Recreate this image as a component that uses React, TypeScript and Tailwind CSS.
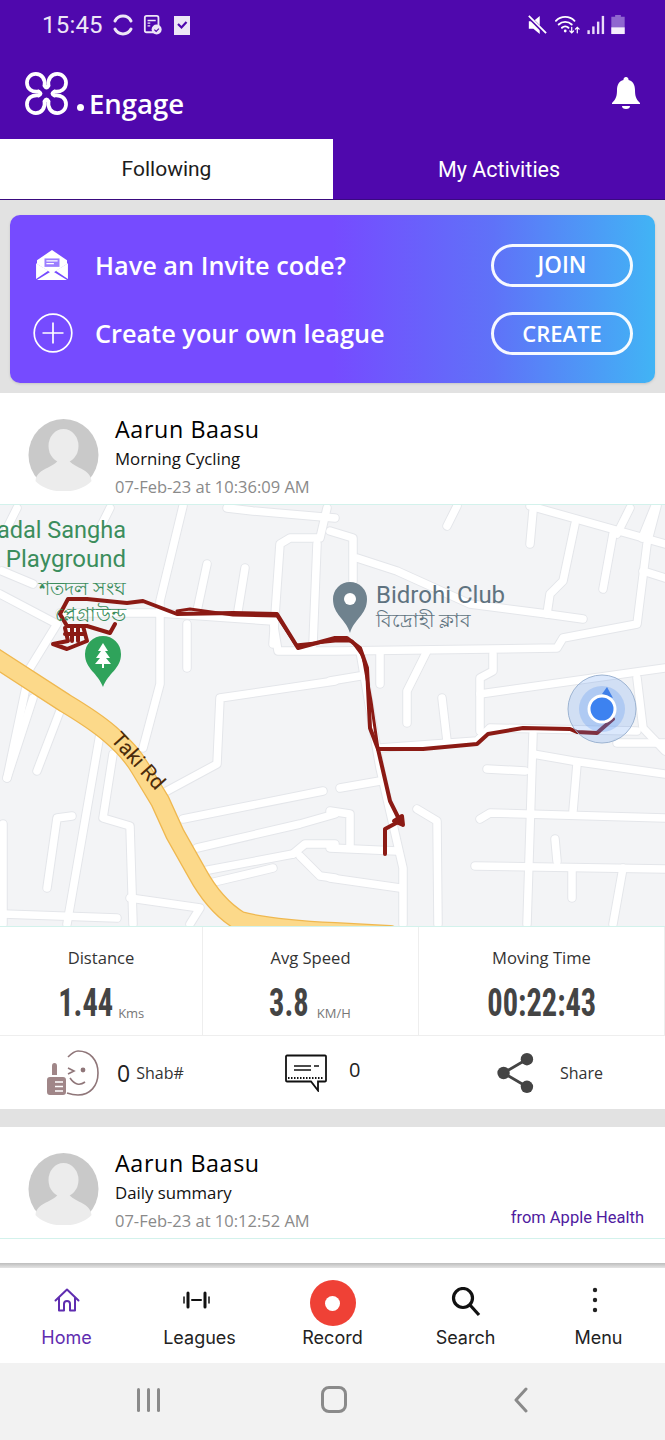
import React from 'react';

// street centre lines, in page coordinates (the map svg starts at y=504)
const roads = [
  'M0 593L57 623L30 667L7 777',
  'M183 505L160 600V683L143 747',
  'M110 507L100 527',
  'M17 507L7 527',
  'M2 570L33 583',
  'M60 612L160 612L273 620L278 650H335L557 647L563 637L637 623L647 543L657 505',
  'M207 563L197 610',
  'M245 567L238 610',
  'M187 623V667',
  'M335 680L220 697L217 763L167 790',
  'M323 790L183 818',
  'M335 813L300 823L197 847',
  'M293 853L203 870',
  'M273 867L210 882',
  'M335 843H305L293 853',
  'M300 855L320 875L335 877',
  'M100 733L67 923',
  'M60 710L37 770',
  'M33 697L7 777',
  'M113 753L103 817L130 825L133 923',
  'M72 815L57 817L47 887',
  'M3 823V923',
  'M130 897L200 907L190 923',
  'M3 913L117 917',
  'M327 507L320 537H290L280 543L273 643',
  'M317 543L313 643',
  'M227 507L253 510L335 517',
  'M330 530L353 537V580',
  'M357 557L397 570L470 603L547 613L583 618',
  'M457 505L447 525',
  'M533 510L530 543',
  'M530 505L665 543',
  'M575 523L563 580L550 593L547 613',
  'M613 533L603 588',
  'M630 507L617 533',
  'M655 505L642 537',
  'M643 570L665 577',
  'M380 650V683',
  'M427 650L407 690V722',
  'M493 653V670L480 677V730',
  'M330 680L360 675',
  'M442 697L447 740',
  'M480 693L665 667',
  'M380 747L477 740L490 727L637 730',
  'M637 677L643 727L665 750',
  'M617 742H665',
  'M533 733L527 923',
  'M487 768L525 770',
  'M533 753L573 760L665 773',
  'M577 763L573 810',
  'M480 818L490 812L665 817',
  'M475 865L665 868',
  'M555 838L557 860',
  'M572 867V897',
  'M623 867L613 923',
  'M340 787L380 780',
  'M360 650L380 767L403 867V923',
  'M417 808L437 820L438 923',
  'M330 810L350 813V847',
  'M330 847L397 850',
  'M330 877L400 887',
];

const takiRoad = 'M-6 656L65 702Q95 720 110 733Q130 750 140 767L160 800L175 833L197 872Q215 905 240 920Q270 928 335 931L390 934';

function MapArt() {
  return (
    <svg viewBox="0 504 665 421" className="block h-full w-full bg-[#f3f4f6]">
      <g fill="none" strokeLinecap="round" strokeLinejoin="round">
        <g stroke="#e4e6ea" strokeWidth="9.5">
          {roads.map((d) => <path key={d} d={d} />)}
        </g>
        <g stroke="#ffffff" strokeWidth="7.5">
          {roads.map((d) => <path key={d} d={d} />)}
        </g>
        <path d={takiRoad} stroke="#efb850" strokeWidth="20" />
        <path d={takiRoad} stroke="#fcd98a" strokeWidth="17.500" />
        {/* the recorded ride */}
        <g stroke="#8b1a14" strokeWidth="4">
          <path d="M115 623L110 632L87 625L67 625L60 613L68 598L87 598L127 602L143 600L177 613L233 612L277 613L298 647L335 637L347 637L360 647L367 667L370 727L378 748L390 800L400 820L385 828V853" />
          <path d="M177 610L190 608L233 614L277 615L296 644L335 640L352 640L363 655L371 700L378 748" strokeWidth="3" />
          <path d="M65 627L68 640L53 643L67 648L87 640L83 625M72 627V640M78 627V640M65 633H84" />
          <path d="M378 748H423L477 743L488 733L523 727L570 728L577 731L597 732L613 718" />
          <path d="M394 820L402 815L403 824Z" fill="#8b1a14" />
        </g>
      </g>
      <text x="126" y="537" textAnchor="end" fontFamily="Roboto, sans-serif" fontSize="23.500" fill="#3b8d5c">adal Sangha</text>
      <text x="126" y="566" textAnchor="end" fontFamily="Roboto, sans-serif" fontSize="24" fill="#3b8d5c">Playground</text>
      <text x="126" y="594" textAnchor="end" fontFamily="Noto Sans, sans-serif" fontSize="19" fill="#3b8d5c">শতদল সংঘ</text>
      <text x="126" y="620" textAnchor="end" fontFamily="Noto Sans, sans-serif" fontSize="19" fill="#3b8d5c">প্লেগ্রাউন্ড</text>
      <text x="376" y="602" fontFamily="Roboto, sans-serif" fontSize="24" fill="#5f7380">Bidrohi Club</text>
      <text x="376" y="626" fontFamily="Noto Sans, sans-serif" fontSize="18.500" fill="#5f7380">বিদ্রোহী ক্লাব</text>
      <text transform="translate(110 739) rotate(48)" fontFamily="Roboto, sans-serif" fontSize="21" fill="#4a2a0a">Taki Rd</text>
      {/* pins */}
      <path d="M103 686C98 672 85 668 85 653a18 18 0 0 1 36 0C121 668 108 672 103 686Z" fill="#2fa35b" />
      <path d="M103 642l5 8h-3l5 7h-4l5 6h-16l5-6h-4l5-7h-3Z" fill="#fff" />
      <rect x="102" y="663" width="2" height="4" fill="#fff" />
      <path d="M350 632C346 618 333 614 333 598a17 17 0 0 1 34 0C367 614 354 618 350 632Z" fill="#6f828e" />
      <circle cx="350" cy="598" r="6" fill="#fff" />
      {/* current location */}
      <circle cx="602" cy="708" r="34" fill="#4a8cf0" fillOpacity="0.2" stroke="#9db4d2" />
      <circle cx="602" cy="708" r="23" fill="#4a8cf0" fillOpacity="0.25" />
      <path d="M607 686L613 697L602 693Z" fill="#3f7fe8" />
      <circle cx="602" cy="708" r="13" fill="#3d82f0" stroke="#fff" strokeWidth="3" />
    </svg>
  );
}

function Avatar() {
  return (
    <svg viewBox="0 0 70 72" className="h-[72px] w-[71px] shrink-0">
      <ellipse cx="35" cy="36" rx="35" ry="36" fill="#c9c9c9" />
      <ellipse cx="35" cy="27" rx="15" ry="17" fill="#ececec" />
      <path d="M7 62C8 50 22 50 29 42H41C48 50 62 50 63 62C50 76 20 76 7 62Z" fill="#ececec" />
    </svg>
  );
}

function PostHead({ title, time }: { title: string; time: string }) {
  return (
    <div className="flex h-[111px] gap-[16px] pl-[28px] pt-[26px]">
      <Avatar />
      <div className="-mt-[5px] flex flex-col">
        <span className="text-[23.300px] leading-[30px] tracking-[0.6px] text-black">Aarun Baasu</span>
        <span className="mt-[3px] text-[16.800px] font-medium leading-[24px] text-[#111]">{title}</span>
        <span className="mt-[4px] text-[16.500px] leading-[24px] text-[#8a8a8a]">{time}</span>
      </div>
    </div>
  );
}

function Stat({ label, value, unit, className, rowClass, unitClass }: { label: string; value: string; unit: string; className: string; rowClass: string; unitClass: string }) {
  return (
    <div className={`flex flex-col items-center border-r border-[#eeeeee] pt-[20px] ${className}`}>
      <span className="text-[16.600px] leading-[22px] text-[#333]">{label}</span>
      <div className={`mt-[12px] flex items-end ${rowClass}`}>
        <span className="origin-center scale-x-[0.78] font-['Liberation_Sans_Narrow','Roboto_Condensed','Roboto',sans-serif] text-[39px] font-bold leading-[44px] text-[#444]">{value}</span>
        {unit && <span className={`mb-[4px] text-[13px] leading-[16px] text-[#777] ${unitClass}`}>{unit}</span>}
      </div>
    </div>
  );
}

function NavItem({ icon, label, active }: { icon: React.ReactNode; label: string; active?: boolean }) {
  return (
    <div className={`flex w-[133px] flex-col items-center font-['Inter',sans-serif] ${active ? 'text-[#5f2db0]' : 'text-[#222]'}`}>
      <div className="flex h-[50px] items-center justify-center">{icon}</div>
      <span className="-mt-[3px] text-[18px] leading-[26px]">{label}</span>
    </div>
  );
}

export default function App() {
  return (
    <div className="flex h-[1440px] w-[665px] flex-col overflow-hidden bg-white font-['Open_Sans',sans-serif]">
      {/* status bar and app bar */}
      <div className="bg-[#4f08ad] text-white">
        <div className="flex h-[54px] items-start justify-between pl-[42px] pr-[40px] pt-[10px]">
          <div className="flex items-center gap-[8px] opacity-90">
            <span className="font-['Roboto',sans-serif] text-[24px] leading-[30px] tracking-[0.2px]">15:45</span>
            <svg viewBox="0 0 24 24" className="h-[24px] w-[24px]" fill="none" stroke="#fff" strokeWidth="3" strokeLinecap="round">
              <path d="M20 8A9 9 0 0 0 4 8" />
              <path d="M4 16a9 9 0 0 0 16 0" />
            </svg>
            <svg viewBox="0 0 22 24" className="h-[22px] w-[20px]">
              <rect x="2" y="2" width="15" height="18" rx="2" fill="none" stroke="#fff" strokeWidth="2" />
              <path d="M5 7h9M5 10h3M5 13h3" stroke="#fff" strokeWidth="1.5" />
              <circle cx="15" cy="17" r="5.5" fill="#fff" />
              <path d="M12.5 17l2 2 3-3" stroke="#4f08ad" strokeWidth="1.3" fill="none" />
            </svg>
            <svg viewBox="0 0 18 22" className="ml-[2px] h-[22px] w-[18px]">
              <path d="M1 2h16v19H1Z" fill="#fff" />
              <path d="M5 10l3.5 3.5L13.500 8" stroke="#4f08ad" strokeWidth="2.200" fill="none" />
            </svg>
          </div>
          <div className="flex items-center gap-[6px] pt-[4px]">
            <svg viewBox="0 0 22 22" className="h-[20px] w-[20px]">
              <path d="M2 7h5l7-6v20l-7-6H2Z" fill="#fff" />
              <path d="M2 2l18 18" stroke="#4f08ad" strokeWidth="4" />
              <path d="M2 1l19 19" stroke="#fff" strokeWidth="2" />
            </svg>
            <svg viewBox="0 0 28 22" className="ml-[2px] h-[21px] w-[26px]" fill="none" stroke="#fff" strokeWidth="2" strokeLinecap="round">
              <path d="M1 7a14 14 0 0 1 20 0M4 11a10 10 0 0 1 14 0M7.500 14.500a5 5 0 0 1 7 0" />
              <circle cx="11" cy="18" r="1.500" fill="#fff" stroke="none" />
              <path d="M18 14v6M16 18l2 2 2-2M24 20v-6M22 16l2-2 2 2" strokeWidth="1.300" />
            </svg>
            <svg viewBox="0 0 18 22" className="h-[21px] w-[18px]" fill="#e9dcf8">
              <rect x="0" y="17" width="2.500" height="4" />
              <rect x="5" y="13" width="2.500" height="8" />
              <rect x="10" y="8" width="2.500" height="13" />
              <rect x="15" y="2" width="2.500" height="19" />
            </svg>
            <svg viewBox="0 0 14 22" className="h-[21px] w-[14px]">
              <path d="M4 1h6v2h4v18H0V3h4Z" fill="#8f66cf" />
              <path d="M0 14h14v7H0Z" fill="#f5eefc" />
            </svg>
          </div>
        </div>

        <div className="flex h-[85px] items-start justify-between pl-[25px] pr-[25px] pt-[18px]">
          <div className="flex items-end">
            {/* league logo: four loops around a hollow centre */}
            <svg viewBox="0 0 44 44" className="h-[43px] w-[43px]" fill="none" stroke="#fff" strokeWidth="3.800" strokeLinecap="round" strokeLinejoin="round">
              <path d="M20 14C21 7 17 2 11 2C6 2 2 6 2 11C2 17 7 21 14 20" />
              <path d="M24 14C23 7 27 2 33 2C38 2 42 6 42 11C42 17 37 21 30 20" />
              <path d="M20 30C21 37 17 42 11 42C6 42 2 38 2 33C2 27 7 23 14 24" />
              <path d="M24 30C23 37 27 42 33 42C38 42 42 38 42 33C42 27 37 23 30 24" />
              <path d="M20 14Q22 18 24 14M20 30Q22 26 24 30M14 20Q18 22 14 24M30 20Q26 22 30 24" />
            </svg>
            <span className="mb-[4px] ml-[9px] h-[7px] w-[7px] rounded-full bg-white" />
            <span className="-mb-[5px] ml-[5px] text-[27.500px] font-semibold leading-[32px]">Engage</span>
          </div>
          <svg viewBox="0 0 28 32" className="mt-[5px] h-[32px] w-[28px]" fill="#fff">
            <path d="M14 0a2.500 2.500 0 0 1 2.500 3C21 4 23 8 23 13c0 6 1 9 5 13v1H0v-1c4-4 5-7 5-13 0-5 2-9 6.500-10A2.500 2.500 0 0 1 14 0Z" />
            <path d="M10 29h8a4 3 0 0 1-8 0Z" />
          </svg>
        </div>

        <div className="flex h-[61px] border-b border-[#3a0a80]">
          <div className="flex w-[333px] items-center justify-center bg-white pt-[2px] font-['Roboto',sans-serif] text-[21px] text-[#1c1c1c]">Following</div>
          <div className="flex flex-1 items-center justify-center pt-[2px] font-['Roboto',sans-serif] text-[21.500px] text-white">My Activities</div>
        </div>
      </div>

      {/* league banner */}
      <div className="bg-[#e2e2e2] px-[10px] pb-[10px] pt-[15px]">
        <div className="h-[168px] rounded-[10px] bg-[linear-gradient(90deg,#764bff_0%,#764bff_50%,#5f72f8_75%,#41b4f5_100%)] pl-[23px] pr-[22px] pt-[28px] text-white shadow-sm">
          <div className="flex h-[44px] items-center">
            <svg viewBox="0 0 34 32" className="ml-[3px] h-[30px] w-[32px]" fill="#fff">
              <path d="M17 0L33 11V15L17 25L1 15V11Z" />
              <path d="M0 14L13 22L0 31ZM34 14V31L21 22ZM15 23.500h4L33 32H1Z" />
              <path d="M9 9h16v9H9Z" fill="#9b7dff" />
              <path d="M11 11.500h12M11 14.500h8" stroke="#fff" strokeWidth="1.300" />
            </svg>
            <span className="ml-[27px] flex-1 text-[25.300px] font-semibold leading-[32px]">Have an Invite code?</span>
            <div className="flex h-[43px] w-[142px] items-center justify-center rounded-full border-[3px] border-white/95 text-[22.500px] font-semibold">JOIN</div>
          </div>
          <div className="mt-[24px] flex h-[44px] items-center">
            <svg viewBox="0 0 40 40" className="h-[40px] w-[40px]" fill="none" stroke="#fff" strokeWidth="1.700">
              <circle cx="20" cy="20" r="18.800" />
              <path d="M20 9.500v21M9.500 20h21" />
            </svg>
            <span className="ml-[22px] flex-1 text-[25.300px] font-semibold leading-[32px]">Create your own league</span>
            <div className="flex h-[43px] w-[142px] items-center justify-center rounded-full border-[3px] border-white/95 text-[22px] font-semibold">CREATE</div>
          </div>
        </div>
      </div>

      {/* first post */}
      <PostHead title="Morning Cycling" time="07-Feb-23 at 10:36:09 AM" />
      <div className="h-[423px] border-y border-[#d3f2ec]">
        <MapArt />
      </div>
      <div className="flex h-[109px] border-b border-[#eeeeee]">
        <Stat label="Distance" value="1.44" unit="Kms" className="w-[203px]" rowClass="-translate-x-[3.500px]" unitClass="-ml-[3px]" />
        <Stat label="Avg Speed" value="3.8" unit="KM/H" className="w-[216px]" rowClass="-translate-x-[3.500px]" unitClass="ml-[3px]" />
        <Stat label="Moving Time" value="00:22:43" unit="" className="flex-1" rowClass="" unitClass="" />
      </div>
      <div className="flex h-[73px] items-center">
        <div className="flex w-[250px] items-center pl-[47px]">
          <svg viewBox="0 0 52 46" className="h-[46px] w-[52px]">
            <path d="M21 7C25 3 28 1 31 1C43 1 51 10 51 23C51 36 43 45 31 45C27 45 23 44 20 43" fill="none" stroke="#8f7679" strokeWidth="1.600" />
            <path d="M21 18L27 21L21 24" fill="none" stroke="#8f7679" strokeWidth="1.600" />
            <circle cx="36" cy="20" r="2.400" fill="#8f7679" />
            <path d="M23 28Q30 38 38 32" fill="none" stroke="#8f7679" strokeWidth="1.600" />
            <path d="M5 16a2.500 3 0 0 1 5 0v9H5ZM3 27h13a3 3 0 0 1 3 3v12a3 3 0 0 1-3 3H3a3 3 0 0 1-3-3V30a3 3 0 0 1 3-3Z" fill="#a08688" />
            <path d="M8 32h8M8 36.500h8M8 41h8" stroke="#fff" strokeWidth="1.500" />
          </svg>
          <span className="ml-[18px] text-[23px] leading-[30px] text-[#222]">0</span>
          <span className="ml-[6px] text-[16px] leading-[24px] text-[#333]">Shab#</span>
        </div>
        <div className="flex w-[247px] items-center pl-[35px]">
          <svg viewBox="0 0 42 38" className="h-[38px] w-[42px]" fill="none" stroke="#111">
            <path d="M2 1.500h38a1 1 0 0 1 1 1v24a1 1 0 0 1-1 1H33v9l-7-9H2a1 1 0 0 1-1-1v-24a1 1 0 0 1 1-1Z" strokeWidth="1.800" />
            <path d="M9 12h17M9 16h17M29 12h5" strokeWidth="1.600" />
            <path d="M3 24h36" strokeWidth="2.200" strokeDasharray="1.500 1.500" />
          </svg>
          <span className="ml-[22px] -translate-y-[3px] text-[20px] leading-[26px] text-[#222]">0</span>
        </div>
        <div className="flex flex-1 items-center">
          <svg viewBox="0 0 38 42" className="h-[40px] w-[37px]" fill="#444">
            <circle cx="6.500" cy="21" r="6.500" />
            <circle cx="31" cy="6.500" r="6.500" />
            <circle cx="31" cy="35.500" r="6.500" />
            <path d="M6.500 21L31 6.500M6.500 21L31 35.500" stroke="#444" strokeWidth="3" />
          </svg>
          <span className="ml-[26px] text-[16px] leading-[24px] text-[#333]">Share</span>
        </div>
      </div>

      <div className="h-[18px] shrink-0 bg-[#e2e2e2]" />

      {/* second post */}
      <div className="relative shrink-0 border-b border-[#d3f2ec]">
        <PostHead title="Daily summary" time="07-Feb-23 at 10:12:52 AM" />
        <span className="absolute bottom-[9px] right-[21px] font-['Roboto',sans-serif] text-[16.500px] leading-[22px] text-[#4f1ba0]">from Apple Health</span>
      </div>
      <div className="h-[24px] shrink-0 bg-white" />

      {/* bottom tabs */}
      <div className="h-[5px] shrink-0 bg-[linear-gradient(180deg,#bdbdbd,#e4e4e4)]" />
      <div className="flex h-[95px] shrink-0 pt-[10px]">
        <NavItem active label="Home" icon={
          <svg viewBox="0 0 26 24" className="-mt-[7px] h-[24px] w-[26px]" fill="none" stroke="currentColor" strokeWidth="2" strokeLinejoin="round" strokeLinecap="round">
            <path d="M1.500 12.500L13 1.500L24.500 12.500" />
            <path d="M5 10V22.500H10V16a3 3 0 0 1 6 0v6.500H21V10" />
          </svg>
        } />
        <NavItem label="Leagues" icon={
          <svg viewBox="0 0 27 18" className="-ml-[7px] -mt-[7px] h-[18px] w-[27px]" fill="none" stroke="#111" strokeLinecap="round">
            <path d="M1 6v6M26 6v6" strokeWidth="1.500" />
            <path d="M5 2v14M22 2v14" strokeWidth="3" />
            <path d="M9 9h9" strokeWidth="2" />
          </svg>
        } />
        <NavItem label="Record" icon={
          <span className="flex h-[46px] w-[46px] items-center justify-center rounded-full bg-[#ef4136]">
            <span className="h-[15px] w-[15px] rounded-full bg-white" />
          </span>
        } />
        <NavItem label="Search" icon={
          <svg viewBox="0 0 30 30" className="-mt-[3px] h-[30px] w-[30px]" fill="none" stroke="#111">
            <circle cx="12" cy="11" r="9.500" strokeWidth="3.200" />
            <path d="M19 18L28 28" strokeWidth="3.200" />
          </svg>
        } />
        <NavItem label="Menu" icon={
          <svg viewBox="0 0 6 26" className="-ml-[8px] -mt-[7px] h-[26px] w-[6px]" fill="#222">
            <circle cx="3" cy="3" r="2.200" />
            <circle cx="3" cy="13" r="2.200" />
            <circle cx="3" cy="23" r="2.200" />
          </svg>
        } />
      </div>

      {/* android navigation */}
      <div className="flex flex-1 items-center bg-[#f2f2f2] pb-[4px]">
        <div className="ml-[137px] flex gap-[7px]">
          <span className="h-[24px] w-[3px] rounded-full bg-[#8a8a8a]" />
          <span className="h-[24px] w-[3px] rounded-full bg-[#8a8a8a]" />
          <span className="h-[24px] w-[3px] rounded-full bg-[#8a8a8a]" />
        </div>
        <span className="ml-[161px] h-[27px] w-[26px] rounded-[8px] border-[3px] border-[#8a8a8a]" />
        <svg viewBox="0 0 16 26" className="ml-[166px] h-[26px] w-[16px]" fill="none" stroke="#8a8a8a" strokeWidth="3" strokeLinecap="round" strokeLinejoin="round">
          <path d="M13 2L3 13L13 24" />
        </svg>
      </div>
    </div>
  );
}
